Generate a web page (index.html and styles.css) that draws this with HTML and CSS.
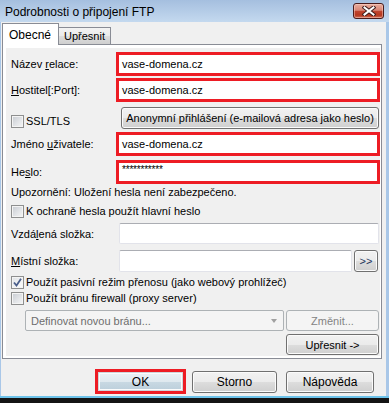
FILE: index.html
```html
<!DOCTYPE html>
<html lang="cs">
<head>
<meta charset="utf-8">
<title>Podrobnosti o připojení FTP</title>
<link rel="stylesheet" href="styles.css">
</head>
<body>
<div class="window">
  <div class="titlebar">
    <span class="title">Podrobnosti o připojení FTP</span>
    <div class="close">
      <svg width="14" height="10" viewBox="0 0 14 10">
        <path d="M2.5 1.5 L11.5 8.5 M11.5 1.5 L2.5 8.5" stroke="#3b1c1c" stroke-width="4" stroke-linecap="square" fill="none"/>
        <path d="M2.5 1.5 L11.5 8.5 M11.5 1.5 L2.5 8.5" stroke="#ffffff" stroke-width="2" stroke-linecap="square" fill="none"/>
      </svg>
    </div>
  </div>
  <div class="client">
    <div class="tabs">
      <div class="tab active">Obecné</div>
      <div class="tab">Upřesnit</div>
    </div>
    <div class="panel">
      <div class="content">
        <div class="row field mt4">
          <span class="lbl">Název <u>r</u>elace:</span>
          <div class="redbox">vase-domena.cz</div>
        </div>
        <div class="row field mt2">
          <span class="lbl"><u>H</u>ostitel[:Port]:</span>
          <div class="redbox">vase-domena.cz</div>
        </div>
        <div class="row ssl mt5">
          <span class="check"><span class="cb"></span><span>SSL/TLS</span></span>
          <div class="btn anon">Anonymní přihlášení (e-mailová adresa jako heslo)</div>
        </div>
        <div class="row field mt3">
          <span class="lbl">Jméno <u>u</u>živatele:</span>
          <div class="redbox">vase-domena.cz</div>
        </div>
        <div class="row field mt4">
          <span class="lbl">He<u>s</u>lo:</span>
          <div class="redbox"><span class="mask">***********</span></div>
        </div>
        <div class="row note mt1">Upozornění: Uložení hesla není zabezpečeno.</div>
        <div class="row checkrow mt4">
          <span class="check"><span class="cb"></span><span>K ochraně hesla použít hlavní heslo</span></span>
        </div>
        <div class="row plain mt4">
          <span class="lbl">Vzdá<u>l</u>ená složka:</span>
          <div class="textbox wide"></div>
        </div>
        <div class="row plain local mt6">
          <span class="lbl"><u>M</u>ístní složka:</span>
          <div class="textbox narrow"></div>
          <div class="btn browse">&gt;&gt;</div>
        </div>
        <div class="row checkrow mt3">
          <span class="check"><span class="cb checked"><svg width="9" height="9" viewBox="0 0 9 9"><path d="M1 4.5 L3.5 7.5 L8 0.8" stroke="#4a5e8a" stroke-width="1.8" fill="none"/></svg></span><span>Použít pasivní režim přenosu (jako webový prohlížeč)</span></span>
        </div>
        <div class="row checkrow mt1">
          <span class="check"><span class="cb"></span><span>Použít bránu firewall (proxy server)</span></span>
        </div>
        <div class="row gateway mt4">
          <div class="combo"><span>Definovat novou bránu...</span><span class="arrow"></span></div>
          <div class="btn side disabled">Změnit...</div>
        </div>
        <div class="row advanced mt3">
          <div class="btn side">Upřesnit -&gt;</div>
        </div>
      </div>
    </div>
    <div class="footer">
      <div class="okbox"><div class="btn ok">OK</div></div>
      <div class="btn dlg storno">Storno</div>
      <div class="btn dlg help">Nápověda</div>
    </div>
  </div>
  <div class="bottomframe"></div>
</div>
</body>
</html>
```

FILE: styles.css
```css
* { box-sizing: border-box; }

html, body {
  margin: 0;
  padding: 0;
  background: #101010;
}

body {
  font-family: "Liberation Sans", Arial, sans-serif;
  font-size: 11px;
  color: #000;
}

.window {
  width: 389px;
  height: 403px;
  display: flex;
  flex-direction: column;
  overflow: hidden;
}

.titlebar {
  height: 22px;
  flex: none;
  display: flex;
  align-items: center;
  justify-content: space-between;
  padding: 0 5px 0 5px;
  background: linear-gradient(#a5bfdf, #c4d9ef);
}

.title {
  font-size: 12px;
  color: #000;
  line-height: 22px;
  padding-top: 1px;
}

.close {
  width: 31px;
  height: 16px;
  margin-top: -1px;
  border: 1px solid #4a1c1c;
  border-radius: 3px;
  display: flex;
  align-items: center;
  justify-content: center;
  background: linear-gradient(#e9ae9f 0%, #d98676 45%, #c0442f 52%, #b5381f 80%, #d0705b 100%);
  box-shadow: inset 0 0 0 1px rgba(255, 220, 210, 0.45);
}

.client {
  height: 374px;
  flex: none;
  background: #f0f0f0;
  border-left: 1px solid #a9c7e8;
  border-right: 3px solid #a9c7e8;
  display: flex;
  flex-direction: column;
}

.bottomframe {
  height: 7px;
  flex: none;
  border-top: 2px solid #6ec3ea;
  background: #141414;
}

/* tabs */
.tabs {
  margin: 1px 0 -1px 1px;
  height: 22px;
  display: flex;
  align-items: flex-end;
  position: relative;
  z-index: 1;
}

.tab {
  height: 17px;
  margin-bottom: 1px;
  padding: 0 5px 0 5px;
  border: 1px solid #898c95;
  border-bottom: none;
  border-left: none;
  background: linear-gradient(#f3f3f3 0%, #ebebeb 50%, #dddddd 51%, #cfcfcf 100%);
  line-height: 17px;
  font-size: 11px;
}

.tab.active {
  height: 22px;
  margin-bottom: 0;
  padding: 0 7px 0 6px;
  border-left: 1px solid #898c95;
  background: #ffffff;
  line-height: 23px;
  font-size: 12px;
}

/* panel */
.panel {
  margin-left: 1px;
  width: 380px;
  height: 315px;
  flex: none;
  border: 1px solid #898c95;
  background: #ffffff;
  padding: 3px 1px 2px 3px;
}

.content {
  width: 374px;
  height: 308px;
  background: #f0f0f0;
  display: flex;
  flex-direction: column;
}

.row {
  display: flex;
  align-items: center;
  flex: none;
}

.mt1 { margin-top: 1px; }
.mt2 { margin-top: 2px; }
.mt3 { margin-top: 3px; }
.mt4 { margin-top: 4px; }
.mt5 { margin-top: 5px; }
.mt6 { margin-top: 6px; }

.lbl {
  width: 110px;
  flex: none;
  padding-left: 5px;
  white-space: nowrap;
}

.field { height: 24px; }

.redbox {
  width: 264px;
  height: 24px;
  border: 3px solid #ed1c24;
  background: #ffffff;
  padding-left: 3px;
  line-height: 18px;
  white-space: nowrap;
}

.mask {
  font-size: 10px;
  letter-spacing: -0.2px;
  position: relative;
  top: -3px;
}

.ssl {
  height: 22px;
  align-items: flex-start;
}

.ssl .check {
  width: 115px;
  margin-top: 8px;
}

.check {
  display: flex;
  align-items: center;
  padding-left: 5px;
  white-space: nowrap;
  line-height: 13px;
}

.cb {
  width: 13px;
  height: 13px;
  flex: none;
  margin-right: 2px;
  border: 1px solid #8e8f8f;
  background: linear-gradient(135deg, #c7cbd1 0%, #e4e6e9 60%, #f6f6f6 100%);
  box-shadow: inset 0 0 0 1px #f4f4f4;
  display: flex;
  align-items: center;
  justify-content: center;
}

.cb.checked {
  background: linear-gradient(135deg, #dfe2e6 0%, #f2f3f4 60%, #fbfbfb 100%);
}

.checkrow { height: 15px; }

.note {
  height: 15px;
  padding-left: 5px;
  line-height: 15px;
  white-space: nowrap;
}

.btn {
  height: 22px;
  border: 1px solid #707070;
  border-radius: 3px;
  background: linear-gradient(#f2f2f2 0%, #ebebeb 50%, #dddddd 51%, #cfcfcf 100%);
  box-shadow: inset 0 0 0 1px #fbfbfb;
  display: flex;
  align-items: center;
  justify-content: center;
  white-space: nowrap;
}

.btn.disabled {
  border-color: #adb2b5;
  background: #f4f4f4;
  box-shadow: none;
  color: #838383;
}

.anon {
  width: 258px;
  margin-left: 0;
}

.plain { height: 21px; }

.textbox {
  height: 21px;
  background: #ffffff;
  border: 1px solid #e2e3ea;
  border-top-color: #abadb3;
  border-radius: 2px;
}

.wide {
  width: 260px;
  margin-left: 3px;
}

.local { height: 22px; }

.narrow {
  width: 233px;
  height: 22px;
  margin-left: 3px;
}

.browse {
  width: 24px;
  margin-left: 2px;
  color: #24365c;
  font-size: 11px;
}

.gateway {
  height: 21px;
  padding-left: 19px;
}

.combo {
  width: 259px;
  height: 21px;
  border: 1px solid #adb2b5;
  border-radius: 2px;
  background: #f4f4f4;
  color: #6d6d6d;
  display: flex;
  align-items: center;
  justify-content: space-between;
  padding: 0 6px 0 5px;
}

.arrow {
  width: 0;
  height: 0;
  border-left: 3.5px solid transparent;
  border-right: 3.5px solid transparent;
  border-top: 4px solid #a0a0a0;
}

.side {
  width: 93px;
  height: 21px;
  margin-left: 2px;
}

.advanced {
  height: 21px;
  padding-left: 280px;
}

.advanced .side { margin-left: 0; }

/* footer */
.footer {
  margin-top: 10px;
  height: 25px;
  display: flex;
  align-items: flex-start;
  padding-left: 94px;
}

.okbox {
  width: 91px;
  height: 25px;
  border: 3px solid #ed1c24;
}

.ok {
  width: 85px;
  height: 19px;
  border-color: #ced6dc;
  border-radius: 0;
  background: linear-gradient(#eaf1f5 0%, #dfe9ef 50%, #c9d9e3 51%, #bccfdb 100%);
  font-size: 12px;
}

.dlg {
  margin-top: 2px;
  font-size: 12px;
}

.storno {
  width: 85px;
  margin-left: 6px;
}

.help {
  width: 88px;
  margin-left: 9px;
}
```
